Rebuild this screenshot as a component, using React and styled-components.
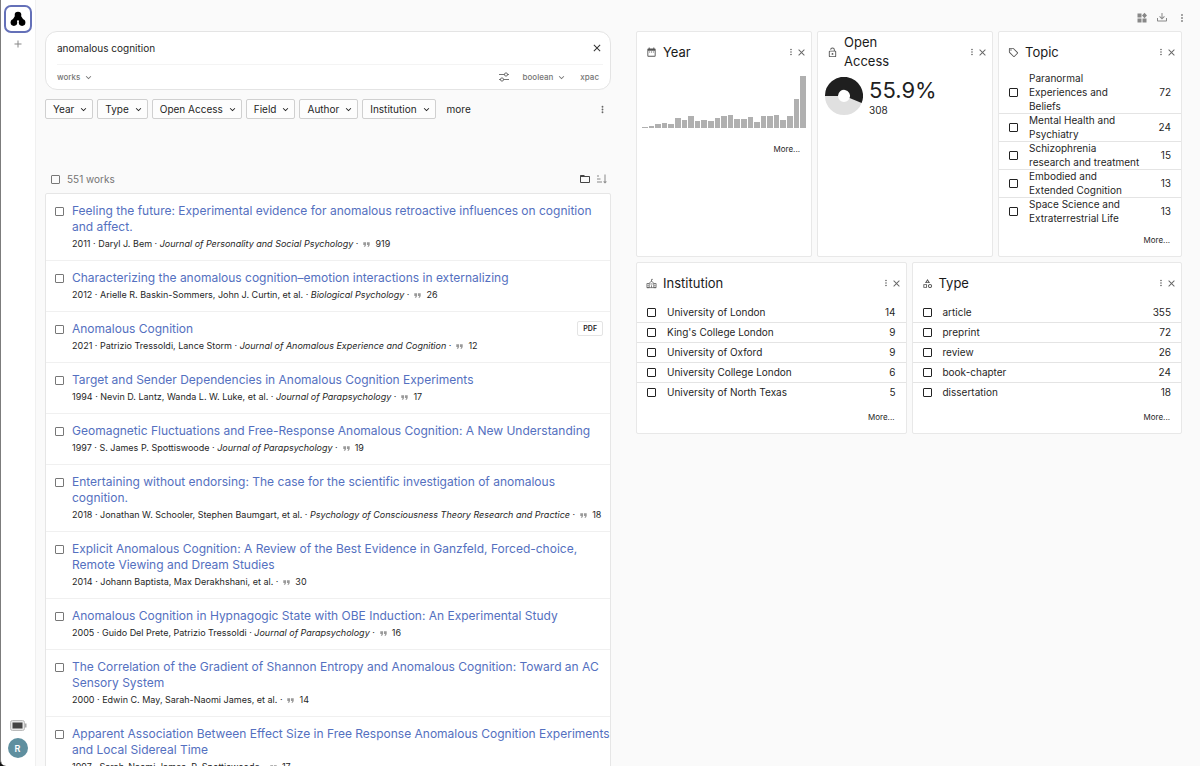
import React, { useState } from "react";
import styled, { createGlobalStyle } from "styled-components";

const GlobalStyle = createGlobalStyle`
  * {
    box-sizing: border-box;
  }

  body {
    margin: 0;
    background-color: #fafafa;
    color: #1f1f1f;
    font-family: Inter, "Liberation Sans", sans-serif;
    font-size: 10px;
    line-height: 14px;
  }

  button, input {
    font-family: inherit;
    color: inherit;
  }
`;

const paths = {
  plus: "M19,13H13V19H11V13H5V11H11V5H13V11H19V13Z",
  close:
    "M19,6.41L17.59,5L12,10.59L6.41,5L5,6.41L10.59,12L5,17.59L6.41,19L12,13.41L17.59,19L19,17.59L13.41,12L19,6.41Z",
  chevron: "M7.41,8.58L12,13.17L16.59,8.58L18,10L12,16L6,10L7.41,8.58Z",
  dots: "M12,16A2,2 0 0,1 14,18A2,2 0 0,1 12,20A2,2 0 0,1 10,18A2,2 0 0,1 12,16M12,10A2,2 0 0,1 14,12A2,2 0 0,1 12,14A2,2 0 0,1 10,12A2,2 0 0,1 12,10M12,4A2,2 0 0,1 14,6A2,2 0 0,1 12,8A2,2 0 0,1 10,6A2,2 0 0,1 12,4Z",
  tune: "M8 13C6.14 13 4.59 14.28 4.14 16H2V18H4.14C4.59 19.72 6.14 21 8 21S11.41 19.72 11.86 18H22V16H11.86C11.41 14.28 9.86 13 8 13M8 19C6.9 19 6 18.1 6 17C6 15.9 6.9 15 8 15S10 15.9 10 17C10 18.1 9.1 19 8 19M19.86 6C19.41 4.28 17.86 3 16 3S12.59 4.28 12.14 6H2V8H12.14C12.59 9.72 14.14 11 16 11S19.41 9.72 19.86 8H22V6H19.86M16 9C14.9 9 14 8.1 14 7C14 5.9 14.9 5 16 5S18 5.9 18 7C18 8.1 17.1 9 16 9Z",
  folder:
    "M20,18H4V8H20M20,6H12L10,4H4C2.89,4 2,4.89 2,6V18A2,2 0 0,0 4,20H20A2,2 0 0,0 22,18V8C22,6.89 21.1,6 20,6Z",
  sort: "M19 17H22L18 21L14 17H17V3H19M2 17H12V19H2M6 5V7H2V5M2 11H9V13H2V11Z",
  quote: "M14,17H17L19,13V7H13V13H16M6,17H9L11,13V7H5V13H8L6,17Z",
  calendar:
    "M9,10H7V12H9V10M13,10H11V12H13V10M17,10H15V12H17V10M19,3H18V1H16V3H8V1H6V3H5C3.89,3 3,3.9 3,5V19A2,2 0 0,0 5,21H19A2,2 0 0,0 21,19V5A2,2 0 0,0 19,3M19,19H5V8H19V19Z",
  lock: "M18,20V10H6V20H18M18,8A2,2 0 0,1 20,10V20A2,2 0 0,1 18,22H6C4.89,22 4,21.1 4,20V10A2,2 0 0,1 6,8H15V6A3,3 0 0,0 12,3A3,3 0 0,0 9,6H7A5,5 0 0,1 12,1A5,5 0 0,1 17,6V8H18M12,17A2,2 0 0,1 10,15A2,2 0 0,1 12,13A2,2 0 0,1 14,15A2,2 0 0,1 12,17Z",
  tag: "M21.41 11.58L12.41 2.58A2 2 0 0 0 11 2H4A2 2 0 0 0 2 4V11A2 2 0 0 0 2.59 12.42L11.59 21.42A2 2 0 0 0 13 22A2 2 0 0 0 14.41 21.41L21.41 14.41A2 2 0 0 0 22 13A2 2 0 0 0 21.41 11.58M13 20L4 11V4H11L20 13M6.5 5A1.5 1.5 0 1 1 5 6.5A1.5 1.5 0 0 1 6.5 5Z",
  shape:
    "M11,13.5V21.5H3V13.5H11M9,15.5H5V19.5H9V15.5M12,2L17.5,11H6.5L12,2M12,5.86L10.08,9H13.92L12,5.86M17.5,13C20,13 22,15 22,17.5C22,20 20,22 17.5,22C15,22 13,20 13,17.5C13,15 15,13 17.5,13M17.5,15A2.5,2.5 0 0,0 15,17.5A2.5,2.5 0 0,0 17.5,20A2.5,2.5 0 0,0 20,17.5A2.5,2.5 0 0,0 17.5,15Z",
  download:
    "M2 12H4V17H20V12H22V17C22 18.11 21.11 19 20 19H4C2.9 19 2 18.11 2 17V12M12 15L17.55 9.54L16.13 8.13L13 11.25V2H11V11.25L7.88 8.13L6.46 9.55L12 15Z",
  widgets: "M3 3H11V11H3V3M3 13H11V21H3V13M13 13H21V21H13V13M17 1.5L22 7L17 12.5L12 7Z",
};

const Icon = ({ name, size = 12 }) => (
  <svg width={size} height={size} viewBox="0 0 24 24" fill="currentColor" aria-hidden="true">
    {name === "hall" ? (
      <g fill="none" stroke="currentColor" strokeWidth="1.6">
        <path d="M12 8V3H15" />
        <path d="M7 12H2V21H7M17 12H22V21H17" />
        <path d="M7 21V11L12 7L17 11V21" />
        <path d="M12 21V16M9.5 13H14.5M2 21H22M4.500 15V18M19.500 15V18" />
      </g>
    ) : (
      <path d={paths[name]} />
    )}
  </svg>
);

const Shell = styled.div`
  display: flex;
  height: 100vh;
  background-color: #111;
`;

const Sidebar = styled.nav`
  display: flex;
  flex-direction: column;
  align-items: center;
  gap: 5px;
  width: 36px;
  padding: 5px 1px 8px 0;
  background-color: #fff;
  border-left: 1px solid #7c7c7c;
  border-right: 1px solid #f0f0f0;
  border-bottom-left-radius: 6px;
`;

const Logo = styled.a`
  display: flex;
  align-items: center;
  justify-content: center;
  width: 28px;
  height: 28px;
  border: 2px solid #6470b8;
  border-radius: 7px;
  color: #000;
`;

const IconButton = styled.button`
  display: flex;
  align-items: center;
  justify-content: center;
  flex: none;
  padding: 0;
  border: none;
  background: none;
  cursor: pointer;
  color: ${(props) => props.$color || "#666"};
`;

const Spacer = styled.div`
  flex: 1;
`;

const Avatar = styled.button`
  width: 20px;
  height: 20px;
  padding: 0;
  border: none;
  border-radius: 50%;
  background-color: #5f8f9f;
  color: #fff;
  font-size: 9px;
  font-weight: 600;
`;

const Main = styled.main`
  flex: 1;
  display: flex;
  align-items: flex-start;
  gap: 25px;
  padding: 0 12px 0 9px;
  background-color: #fafafa;
  overflow-y: auto;
  scrollbar-width: none;
`;

const Results = styled.section`
  flex: 566 1 0;
  min-width: 0;
  padding-top: 31px;
`;

const Dashboard = styled.section`
  flex: 552 1 0;
  min-width: 0;
  padding-top: 11px;
`;

const SearchBox = styled.form`
  padding: 0 7px 0 11px;
  background-color: #fff;
  border: 1px solid #e4e4e4;
  border-radius: 12px;
`;

const SearchRow = styled.div`
  display: flex;
  align-items: center;
  height: 33px;
  border-bottom: 1px solid #f4f4f4;
`;

const SearchInput = styled.input`
  flex: 1;
  min-width: 0;
  padding: 0;
  border: none;
  outline: none;
  background: none;
  font-size: 10px;
`;

const OptionRow = styled.div`
  display: flex;
  align-items: center;
  gap: 13px;
  height: 24px;
  padding-right: 4px;
`;

const TextButton = styled.button`
  display: flex;
  align-items: center;
  gap: 3px;
  padding: 0;
  border: none;
  background: none;
  color: #757575;
  font-size: 8px;
  font-weight: 500;
  cursor: pointer;
`;

const Filters = styled.div`
  display: flex;
  align-items: center;
  gap: 4px;
  margin-top: 9px;
  padding-right: 3px;
`;

const FilterButton = styled.button`
  display: flex;
  align-items: center;
  gap: 4px;
  height: 20px;
  padding: 0 3px 0 7px;
  border: 1px solid #d0d0d0;
  border-radius: 2px;
  background-color: #fdfdfd;
  font-size: 10px;
  cursor: pointer;
`;

const MoreFilters = styled.button`
  padding: 0 7px;
  border: none;
  background: none;
  font-size: 10px;
  cursor: pointer;
`;

const ListHead = styled.div`
  display: flex;
  align-items: center;
  gap: 5px;
  height: 28px;
  margin-top: 46px;
  padding: 0 3px 0 6px;
  color: #757575;
`;

const CheckLabel = styled.label`
  display: flex;
  align-items: center;
  gap: 7px;
`;

const Check = styled.input`
  appearance: none;
  flex: none;
  width: 9px;
  height: 9px;
  margin: 0;
  border: 1px solid ${(props) => props.$color || "#777"};
  border-radius: 1px;

  &:checked {
    background-color: #555;
  }
`;

const WorkList = styled.ul`
  margin: 0;
  padding: 0;
  list-style: none;
  background-color: #fff;
  border: 1px solid #e6e6e6;
  border-radius: 2px;
`;

const WorkItem = styled.li`
  display: flex;
  align-items: flex-start;
  padding: 9px 0 9px 9px;
  border-bottom: 1px solid #f0f0f0;

  ${Check} {
    margin-top: 4px;
  }
`;

const WorkBody = styled.div`
  flex: 1;
  min-width: 0;
  margin-left: 8px;
`;

const WorkTitle = styled.a`
  display: block;
  color: #5470c0;
  font-size: 12px;
  font-weight: 400;
  line-height: 16px;
  text-decoration: none;
`;

const WorkMeta = styled.div`
  display: flex;
  align-items: center;
  gap: 3px;
  margin-top: 2px;
  font-size: 9px;
  line-height: 14px;
  white-space: pre;

  svg {
    color: #999;
  }
`;

const PdfLink = styled.a`
  margin-right: 7px;
  padding: 0 5px;
  border: 1px solid #e4e4e4;
  border-radius: 2px;
  color: #1f1f1f;
  font-size: 7px;
  font-weight: 600;
  line-height: 13px;
  text-decoration: none;
`;

const Toolbar = styled.div`
  display: flex;
  justify-content: flex-end;
  gap: 8px;
  height: 13px;
  margin-bottom: 7px;
`;

const CardRow = styled.div`
  display: flex;
  align-items: stretch;
  gap: 5px;
  margin-bottom: 5px;
  padding-right: 6px;
`;

const Card = styled.article`
  display: flex;
  flex-direction: column;
  flex: ${(props) => props.$grow || 1} 1 0;
  min-width: 0;
  padding-bottom: 9px;
  background-color: #fff;
  border: 1px solid #e8e8e8;
  border-radius: 2px;
`;

const CardHead = styled.header`
  display: flex;
  align-items: center;
  height: 39px;
  padding: 1px 4px 0 9px;
  color: #555;
`;

const CardTitle = styled.h2`
  flex: 1;
  max-width: ${(props) => (props.$narrow ? "60px" : "none")};
  margin: 0 auto 0 6px;
  color: #1a1a1a;
  font-size: 13px;
  font-weight: 400;
  line-height: 19px;
`;

const FacetTable = styled.table`
  width: 100%;
  border-collapse: collapse;
  font-size: 10px;
  line-height: 14px;
`;

const FacetRow = styled.tr`
  height: ${(props) => (props.$tall ? "28px" : "20px")};

  & + & {
    box-shadow: inset 0 1px #e4e4e4;
  }
`;

const FacetCell = styled.td`
  padding: 0 0 0 10px;

  label {
    display: flex;
    align-items: center;
    gap: 11px;
  }
`;

const CountCell = styled.td`
  width: 40px;
  padding: 0 10px 0 0;
  text-align: right;
`;

const MoreLink = styled.a`
  align-self: flex-end;
  margin: ${(props) => (props.$push ? "14px" : "8px")} 11px 0 0;
  color: #1f1f1f;
  font-size: 8px;
  line-height: 14px;
  text-decoration: none;
`;

const Chart = styled.div`
  display: flex;
  align-items: flex-end;
  gap: 1px;
  height: 52px;
  margin: 5px 5px 0;
`;

const Bar = styled.div`
  flex: 1;
  background-color: #b0b0b0;
`;

const Share = styled.div`
  display: flex;
  align-items: flex-start;
  gap: 6px;
  padding: 6px 0 0 7px;
`;

const Percent = styled.div`
  font-size: 22px;
  line-height: 26px;
`;

const years = [1, 2, 4, 5, 4, 10, 8, 12, 7, 8, 7, 10, 12, 13, 9, 9, 11, 6, 12, 12, 13, 8, 12, 29, 52];

const filters = ["Year", "Type", "Open Access", "Field", "Author", "Institution"];

const works = [
  {
    title:
      "Feeling the future: Experimental evidence for anomalous retroactive influences on cognition and affect.",
    by: "2011 · Daryl J. Bem · ",
    journal: "Journal of Personality and Social Psychology",
    cited: 919,
  },
  {
    title: "Characterizing the anomalous cognition–emotion interactions in externalizing",
    by: "2012 · Arielle R. Baskin-Sommers, John J. Curtin, et al. · ",
    journal: "Biological Psychology",
    cited: 26,
  },
  {
    title: "Anomalous Cognition",
    by: "2021 · Patrizio Tressoldi, Lance Storm · ",
    journal: "Journal of Anomalous Experience and Cognition",
    cited: 12,
    pdf: true,
  },
  {
    title: "Target and Sender Dependencies in Anomalous Cognition Experiments",
    by: "1994 · Nevin D. Lantz, Wanda L. W. Luke, et al. · ",
    journal: "Journal of Parapsychology",
    cited: 17,
  },
  {
    title: "Geomagnetic Fluctuations and Free-Response Anomalous Cognition: A New Understanding",
    by: "1997 · S. James P. Spottiswoode · ",
    journal: "Journal of Parapsychology",
    cited: 19,
  },
  {
    title:
      "Entertaining without endorsing: The case for the scientific investigation of anomalous cognition.",
    by: "2018 · Jonathan W. Schooler, Stephen Baumgart, et al. · ",
    journal: "Psychology of Consciousness Theory Research and Practice",
    cited: 18,
  },
  {
    title:
      "Explicit Anomalous Cognition: A Review of the Best Evidence in Ganzfeld, Forced-choice, Remote Viewing and Dream Studies",
    by: "2014 · Johann Baptista, Max Derakhshani, et al.",
    cited: 30,
  },
  {
    title: "Anomalous Cognition in Hypnagogic State with OBE Induction: An Experimental Study",
    by: "2005 · Guido Del Prete, Patrizio Tressoldi · ",
    journal: "Journal of Parapsychology",
    cited: 16,
  },
  {
    title:
      "The Correlation of the Gradient of Shannon Entropy and Anomalous Cognition: Toward an AC Sensory System",
    by: "2000 · Edwin C. May, Sarah-Naomi James, et al.",
    cited: 14,
  },
  {
    title:
      "Apparent Association Between Effect Size in Free Response Anomalous Cognition Experiments and Local Sidereal Time",
    by: "1997 · Sarah-Naomi James, P. Spottiswoode",
    cited: 17,
  },
];

const topics = [
  ["Paranormal\nExperiences and\nBeliefs", 72],
  ["Mental Health and\nPsychiatry", 24],
  ["Schizophrenia\nresearch and treatment", 15],
  ["Embodied and\nExtended Cognition", 13],
  ["Space Science and\nExtraterrestrial Life", 13],
];

const institutions = [
  ["University of London", 14],
  ["King's College London", 9],
  ["University of Oxford", 9],
  ["University College London", 6],
  ["University of North Texas", 5],
];

const types = [
  ["article", 355],
  ["preprint", 72],
  ["review", 26],
  ["book-chapter", 24],
  ["dissertation", 18],
];

const Widget = ({ icon, title, grow, narrow, children }) => (
  <Card $grow={grow}>
    <CardHead>
      <Icon name={icon} size={11} />
      <CardTitle $narrow={narrow}>{title}</CardTitle>
      <IconButton aria-label={title + " menu"}>
        <Icon name="dots" size={10} />
      </IconButton>
      <IconButton aria-label={"Remove " + title}>
        <Icon name="close" size={11} />
      </IconButton>
    </CardHead>
    {children}
  </Card>
);

const LabelText = styled.span`
  white-space: pre-line;
`;

const Facets = ({ rows, tall }) => (
  <>
    <FacetTable>
      <tbody>
        {rows.map(([name, count]) => (
          <FacetRow key={name} $tall={tall}>
            <FacetCell>
              <label>
                <Check type="checkbox" $color="#222" />
                <LabelText>{name}</LabelText>
              </label>
            </FacetCell>
            <CountCell>{count}</CountCell>
          </FacetRow>
        ))}
      </tbody>
    </FacetTable>
    <MoreLink href="#more">More...</MoreLink>
  </>
);

const Work = ({ work }) => (
  <WorkItem>
    <Check type="checkbox" aria-label={work.title} />
    <WorkBody>
      <WorkTitle href="#work">{work.title}</WorkTitle>
      <WorkMeta>
        <span>
          {work.by}
          {work.journal && <em>{work.journal}</em>} ·
        </span>
        <Icon name="quote" size={11} />
        <span>{work.cited}</span>
      </WorkMeta>
    </WorkBody>
    {work.pdf && <PdfLink href="#pdf">PDF</PdfLink>}
  </WorkItem>
);

const App = () => {
  const [query, setQuery] = useState("anomalous cognition");

  return (
    <Shell>
      <GlobalStyle />
      <Sidebar>
        <Logo href="#home" aria-label="Home">
          <svg width="18" height="18" viewBox="0 0 18 18" fill="currentColor">
            <circle cx="9" cy="5" r="3.3" />
            <circle cx="4.900" cy="12.600" r="3.3" />
            <circle cx="13.100" cy="12.600" r="3.3" />
            <path d="M6 6L12 6L15 10.500L11 14L9.600 10.200H8.400L7 14L3 10.500Z" />
          </svg>
        </Logo>
        <IconButton aria-label="New tab" $color="#888">
          <Icon name="plus" />
        </IconButton>
        <Spacer />
        <IconButton aria-label="Battery">
          <svg width="18" height="14" viewBox="0 0 18 14">
            <rect x="1.500" y="1.500" width="14" height="10" rx="2" fill="#e6e6e6" stroke="#bbb" />
            <rect x="3.500" y="3.500" width="10" height="6" fill="#444" />
            <rect x="16" y="4.500" width="1.500" height="4" fill="#aaa" />
          </svg>
        </IconButton>
        <Avatar>R</Avatar>
      </Sidebar>
      <Main>
        <Results>
          <SearchBox onSubmit={(e) => e.preventDefault()}>
            <SearchRow>
              <SearchInput
                aria-label="Search"
                value={query}
                onChange={(e) => setQuery(e.target.value)}
              />
              <IconButton type="button" aria-label="Clear" $color="#333" onClick={() => setQuery("")}>
                <Icon name="close" />
              </IconButton>
            </SearchRow>
            <OptionRow>
              <TextButton type="button">
                works <Icon name="chevron" size={11} />
              </TextButton>
              <Spacer />
              <IconButton type="button" aria-label="Options" $color="#757575">
                <Icon name="tune" />
              </IconButton>
              <TextButton type="button">
                boolean <Icon name="chevron" size={11} />
              </TextButton>
              <TextButton type="button">xpac</TextButton>
            </OptionRow>
          </SearchBox>
          <Filters>
            {filters.map((name) => (
              <FilterButton key={name}>
                {name} <Icon name="chevron" size={11} />
              </FilterButton>
            ))}
            <MoreFilters>more</MoreFilters>
            <Spacer />
            <IconButton aria-label="Filter menu">
              <Icon name="dots" size={11} />
            </IconButton>
          </Filters>
          <ListHead>
            <CheckLabel>
              <Check type="checkbox" />
              551 works
            </CheckLabel>
            <Spacer />
            <IconButton aria-label="Folders" $color="#444">
              <Icon name="folder" />
            </IconButton>
            <IconButton aria-label="Sort" $color="#888">
              <Icon name="sort" />
            </IconButton>
          </ListHead>
          <WorkList>
            {works.map((work) => (
              <Work key={work.title} work={work} />
            ))}
          </WorkList>
        </Results>
        <Dashboard>
          <Toolbar>
            <IconButton aria-label="Widgets" $color="#888">
              <Icon name="widgets" />
            </IconButton>
            <IconButton aria-label="Download" $color="#888">
              <Icon name="download" />
            </IconButton>
            <IconButton aria-label="Menu" $color="#888">
              <Icon name="dots" />
            </IconButton>
          </Toolbar>
          <CardRow>
            <Widget icon="calendar" title="Year" grow={176}>
              <Chart>
                {years.map((value, i) => (
                  <Bar key={i} style={{ height: value + "px" }} />
                ))}
              </Chart>
              <MoreLink href="#more" $push>
                More...
              </MoreLink>
            </Widget>
            <Widget icon="lock" title="Open Access" grow={176} narrow>
              <Share>
                <svg width="38" height="38" viewBox="0 0 38 38">
                  <circle cx="19" cy="19" r="12.5" fill="none" stroke="#e0e0e0" strokeWidth="13" />
                  <path
                    d="M6.5 19A12.5 12.5 0 1 1 30.6 23.5"
                    fill="none"
                    stroke="#1f1f1f"
                    strokeWidth="13"
                  />
                </svg>
                <div>
                  <Percent>55.9%</Percent>
                  308
                </div>
              </Share>
            </Widget>
            <Widget icon="tag" title="Topic" grow={184}>
              <Facets rows={topics} tall />
            </Widget>
          </CardRow>
          <CardRow>
            <Widget icon="hall" title="Institution">
              <Facets rows={institutions} />
            </Widget>
            <Widget icon="shape" title="Type">
              <Facets rows={types} />
            </Widget>
          </CardRow>
        </Dashboard>
      </Main>
    </Shell>
  );
};

export default App;
